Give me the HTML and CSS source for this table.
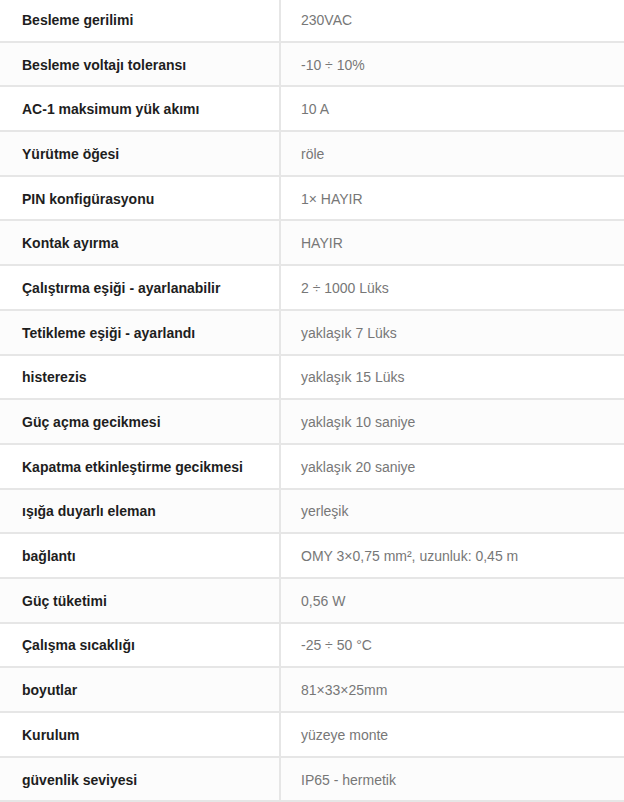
FILE: index.html
```html
<!DOCTYPE html>
<html lang="tr">
<head>
<meta charset="utf-8">
<title>Teknik özellikler</title>
<link rel="stylesheet" href="styles.css">
</head>
<body>
<div class="specs">
  <div class="row"><div class="label">Besleme gerilimi</div><div class="value">230VAC</div></div>
  <div class="row"><div class="label">Besleme voltajı toleransı</div><div class="value">-10 ÷ 10%</div></div>
  <div class="row"><div class="label">AC-1 maksimum yük akımı</div><div class="value">10 A</div></div>
  <div class="row"><div class="label">Yürütme öğesi</div><div class="value">röle</div></div>
  <div class="row"><div class="label">PIN konfigürasyonu</div><div class="value">1× HAYIR</div></div>
  <div class="row"><div class="label">Kontak ayırma</div><div class="value">HAYIR</div></div>
  <div class="row"><div class="label">Çalıştırma eşiği - ayarlanabilir</div><div class="value">2 ÷ 1000 Lüks</div></div>
  <div class="row"><div class="label">Tetikleme eşiği - ayarlandı</div><div class="value">yaklaşık 7 Lüks</div></div>
  <div class="row"><div class="label">histerezis</div><div class="value">yaklaşık 15 Lüks</div></div>
  <div class="row"><div class="label">Güç açma gecikmesi</div><div class="value">yaklaşık 10 saniye</div></div>
  <div class="row"><div class="label">Kapatma etkinleştirme gecikmesi</div><div class="value">yaklaşık 20 saniye</div></div>
  <div class="row"><div class="label">ışığa duyarlı eleman</div><div class="value">yerleşik</div></div>
  <div class="row"><div class="label">bağlantı</div><div class="value">OMY 3×0,75 mm², uzunluk: 0,45 m</div></div>
  <div class="row"><div class="label">Güç tüketimi</div><div class="value">0,56 W</div></div>
  <div class="row"><div class="label">Çalışma sıcaklığı</div><div class="value">-25 ÷ 50 °C</div></div>
  <div class="row"><div class="label">boyutlar</div><div class="value">81×33×25mm</div></div>
  <div class="row"><div class="label">Kurulum</div><div class="value">yüzeye monte</div></div>
  <div class="row"><div class="label">güvenlik seviyesi</div><div class="value">IP65 - hermetik</div></div>
</div>
</body>
</html>
```
FILE: styles.css
```css
html, body {
  margin: 0;
  padding: 0;
  background: #ffffff;
}
body {
  font-family: "Liberation Sans", Arial, sans-serif;
  font-size: 14px;
  overflow: hidden;
}
.specs {
  margin-top: -2px;
  display: flex;
  flex-direction: column;
}
.row {
  display: grid;
  grid-template-columns: 281px 1fr;
  height: 44.7px;
  box-sizing: border-box;
  border-bottom: 2px solid #e6e6e6;
  background: #ffffff;
}
.row:nth-child(even) {
  background: #fcfcfc;
}
.label, .value {
  display: flex;
  align-items: center;
  line-height: 16px;
  padding-top: 1px;
  box-sizing: border-box;
  white-space: nowrap;
}
.label {
  padding-left: 22px;
  font-weight: bold;
  color: #1e1e1e;
  border-right: 2px solid #e6e6e6;
}
.value {
  padding-left: 20px;
  color: #777777;
}
```
